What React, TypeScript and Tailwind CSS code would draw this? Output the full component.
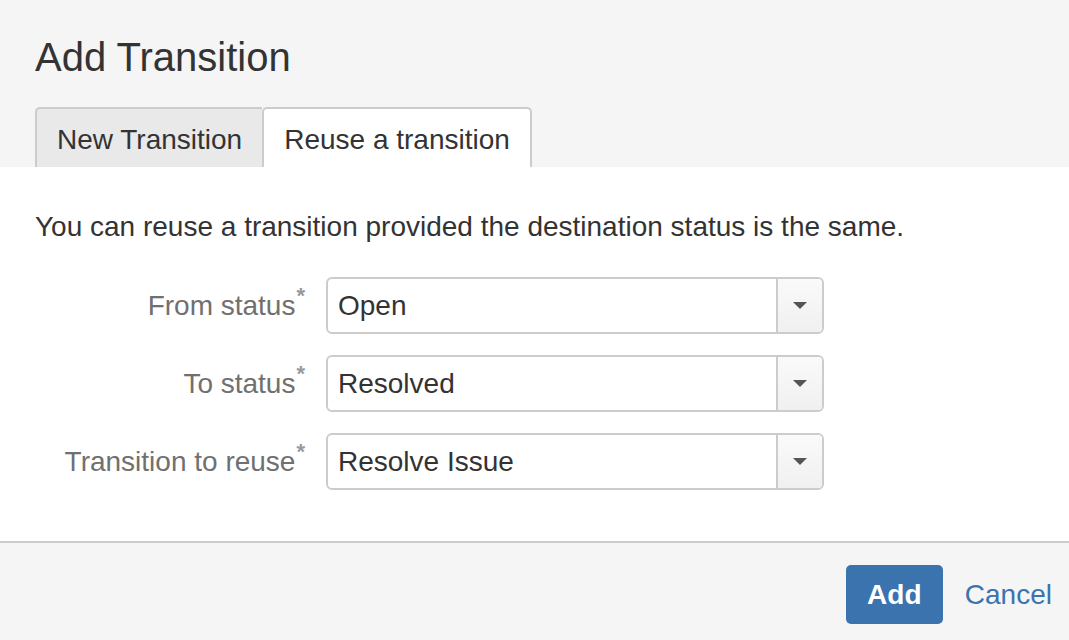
const rows = [
  { label: "From status", value: "Open" },
  { label: "To status", value: "Resolved" },
  { label: "Transition to reuse", value: "Resolve Issue" },
];

function Select({ value }: { value: string }) {
  return (
    <div className="flex w-[498px] h-[57px] border-2 border-[#cccccc] rounded-[6px] bg-white overflow-hidden">
      <div className="flex-1 pl-[10px] leading-[53px] text-[28px] text-[#333333]">{value}</div>
      <div className="w-[46px] border-l-2 border-[#cccccc] bg-gradient-to-b from-[#fafafa] to-[#f0f0f0] flex items-center justify-center">
        <svg width="14" height="8" viewBox="0 0 14 8">
          <path d="M0 0 L14 0 L7 7 Z" fill="#555555" />
        </svg>
      </div>
    </div>
  );
}

export default function App() {
  return (
    <div className="w-[1069px] h-[640px] flex flex-col bg-white text-[#333333]" style={{ fontFamily: '"Liberation Sans", Arial, sans-serif' }}>
      <div className="bg-[#f5f5f5] px-[35px] pt-[33px]">
        <h1 className="text-[40px] leading-[48px] font-normal">Add Transition</h1>
        <div className="flex mt-[26px] text-[28px]">
          <div className="h-[60px] px-[20px] pt-[3px] leading-[55px] bg-[#e9e9e9] border-l-2 border-t-2 border-[#cccccc] rounded-tl-[5px]">
            New Transition
          </div>
          <div className="h-[60px] px-[20px] pt-[3px] leading-[55px] bg-white border-l-2 border-t-2 border-r-2 border-[#cccccc] rounded-t-[5px]">
            Reuse a transition
          </div>
        </div>
      </div>

      <div className="h-[374px] bg-white px-[35px] pt-[40px]">
        <p className="text-[28px] leading-[40px]">You can reuse a transition provided the destination status is the same.</p>
        <div className="mt-[30px] flex flex-col gap-[21px]">
          {rows.map((r) => (
            <div key={r.label} className="flex items-center gap-[21px] h-[57px]">
              <label className="w-[270px] text-right text-[28px] leading-[57px] text-[#707070] whitespace-nowrap">
                {r.label}
                <span className="relative top-[-12px] ml-[1px] text-[22px] leading-none font-bold text-[#999999]">*</span>
              </label>
              <Select value={r.value} />
            </div>
          ))}
        </div>
      </div>

      <div className="flex-1 bg-[#f5f5f5] border-t-2 border-[#cccccc] flex justify-end items-start pt-[22px] pr-[17px] gap-[22px]">
        <button className="h-[59px] w-[97px] rounded-[5px] bg-[#3b73af] text-white text-[28px] font-bold">Add</button>
        <button className="h-[59px] text-[28px] text-[#3b73af]">Cancel</button>
      </div>
    </div>
  );
}
